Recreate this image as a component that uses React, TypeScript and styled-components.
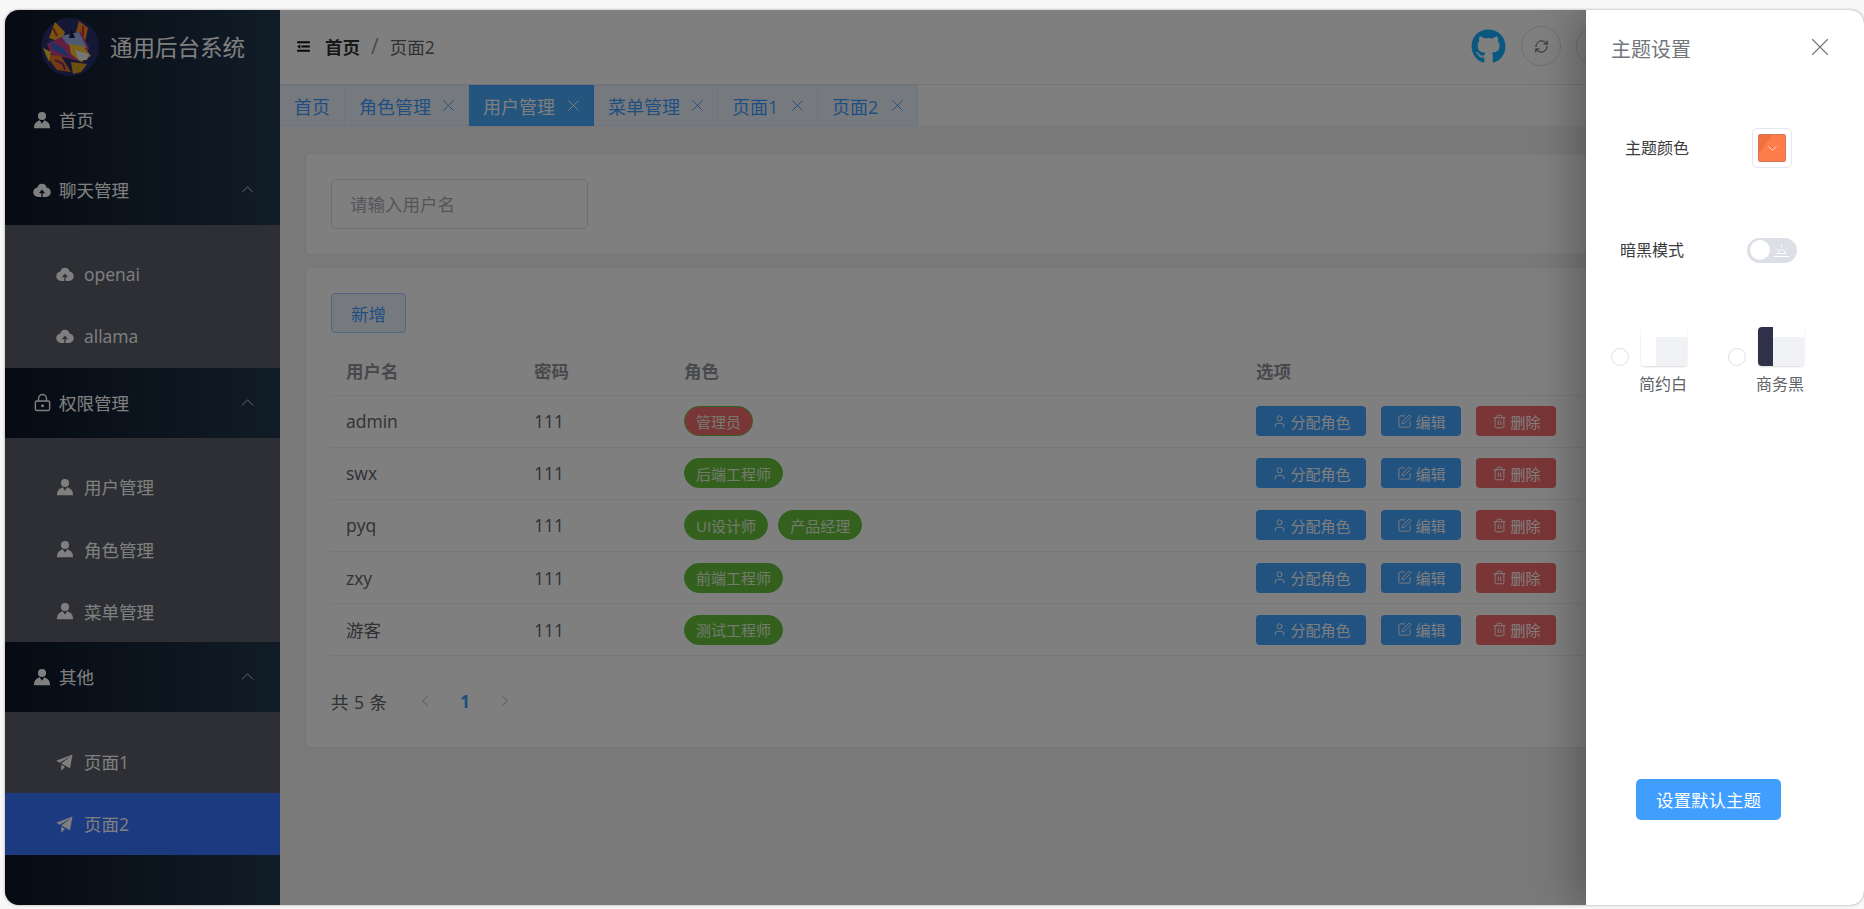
import React from "react";
import styled, { createGlobalStyle } from "styled-components";
import { ChevronDown, ChevronLeft, ChevronRight, ChevronUp, LockKeyhole, RefreshCw, Settings, SquarePen, Trash2, User, X } from "lucide-react";
import { FaGithub } from "react-icons/fa";

const GlobalStyle = createGlobalStyle`
  html, body {
    margin: 0;
    padding: 0;
    background: #f7f7f7;
  }
  * {
    box-sizing: border-box;
  }
  body {
    font-family: "Open Sans", "Noto Sans CJK SC", sans-serif;
  }
`;

const AvatarIcon = ({ size = 20 }: { size?: number }) => (
  <svg width={size} height={size} viewBox="0 0 1024 1024" fill="currentColor">
    <path d="M628.736 528.896A416 416 0 0 1 928 928H96a415.872 415.872 0 0 1 299.264-399.104L512 704l116.736-175.104zM720 304a208 208 0 1 1-416 0 208 208 0 0 1 416 0z" />
  </svg>
);

const CloudIcon = ({ size = 20 }: { size?: number }) => (
  <svg width={size} height={size} viewBox="0 0 1024 1024" fill="currentColor">
    <path d="M544 864V672h128L512 480 352 672h128v192H320v-1.6c-5.376.32-10.496 1.6-16 1.6A240 240 0 0 1 64 624c0-123.136 93.12-223.488 212.608-237.248A239.808 239.808 0 0 1 512 192a239.872 239.872 0 0 1 235.456 194.752c119.488 13.76 212.48 114.112 212.48 237.248a240 240 0 0 1-240 240c-5.376 0-10.56-1.28-16-1.6v1.6H544z" />
  </svg>
);

const PlaneIcon = ({ size = 20 }: { size?: number }) => (
  <svg width={size} height={size} viewBox="0 0 1024 1024" fill="currentColor">
    <path d="m64 448 832-320-128 704-446.08-243.328L832 192 242.816 545.472 64 448zm256 512V657.024L512 768 320 960z" />
  </svg>
);

const FoldIcon = () => (
  <svg width="17" height="17" viewBox="0 0 1024 1024" fill="currentColor">
    <path d="M896 192H128v128h768V192zm0 256H384v128h512V448zm0 256H128v128h768V704zM320 384 128 512l192 128V384z" />
  </svg>
);

const SunriseIcon = () => (
  <svg width="17" height="15" viewBox="0 0 17 15" fill="none" stroke="currentColor" strokeWidth="1">
    <path d="M1 13.5h15M4 10.5h9M4.5 10.5a4 4 0 0 1 8 0M8.5 1.5v2.5M2.5 5l1.6 1.6M14.5 5l-1.6 1.6" />
  </svg>
);

// small painted cat head for the logo
const Logo = () => (
  <LogoBox viewBox="0 0 58 58">
    <circle cx="29" cy="29" r="29" fill="#2a2f6e" />
    <path d="M14 4 L24 14 L20 24 L8 20 Z" fill="#f0a820" />
    <path d="M38 3 L47 10 L44 24 L35 14 Z" fill="#f08a20" />
    <path d="M6 26 L22 18 L40 14 L48 30 L42 44 L26 40 L10 36 Z" fill="#c83e80" />
    <path d="M20 18 L38 14 L46 30 L36 30 L26 26 Z" fill="#9ab4e8" />
    <path d="M28 26 L42 28 L50 38 L40 44 L30 36 Z" fill="#f4c430" />
    <path d="M34 32 L48 36 L46 42 L38 42 Z" fill="#e8edf5" />
    <path d="M4 36 L20 38 L30 54 L16 52 Z" fill="#e87820" />
    <path d="M30 44 L46 46 L40 54 L32 56 Z" fill="#d9a020" />
    <path d="M8 22 L22 30 L30 40 L12 32 Z" fill="#3d62c8" />
    <path d="M2 30 L10 34 L8 44 Z" fill="#f4c430" />
    <path d="M30 10 L34 20 L28 20 Z" fill="#1d1f4a" />
    <path d="M14 42 L22 46 L24 52" fill="none" stroke="#8a2a70" strokeWidth="2" />
    <path d="M12 10 L16 18 M42 8 L42 18" fill="none" stroke="#c83020" strokeWidth="2" />
  </LogoBox>
);

type MenuChild = { label: string; icon: React.ReactNode; active?: boolean };
type MenuGroup = { label: string; icon: React.ReactNode; children?: MenuChild[] };

const menu: MenuGroup[] = [
  { label: "首页", icon: <AvatarIcon /> },
  {
    label: "聊天管理",
    icon: <CloudIcon />,
    children: [
      { label: "openai", icon: <CloudIcon /> },
      { label: "allama", icon: <CloudIcon /> },
    ],
  },
  {
    label: "权限管理",
    icon: <LockKeyhole size={19} strokeWidth={1.8} />,
    children: [
      { label: "用户管理", icon: <AvatarIcon /> },
      { label: "角色管理", icon: <AvatarIcon /> },
      { label: "菜单管理", icon: <AvatarIcon /> },
    ],
  },
  {
    label: "其他",
    icon: <AvatarIcon />,
    children: [
      { label: "页面1", icon: <PlaneIcon /> },
      { label: "页面2", icon: <PlaneIcon />, active: true },
    ],
  },
];

const tabs = [
  { label: "首页", width: 65 },
  { label: "角色管理", width: 124, closable: true },
  { label: "用户管理", width: 125, closable: true, active: true },
  { label: "菜单管理", width: 124, closable: true },
  { label: "页面1", width: 100, closable: true },
  { label: "页面2", width: 100, closable: true },
];

const users = [
  { name: "admin", password: "111", roles: [{ label: "管理员", danger: true }] },
  { name: "swx", password: "111", roles: [{ label: "后端工程师" }] },
  { name: "pyq", password: "111", roles: [{ label: "UI设计师" }, { label: "产品经理" }] },
  { name: "zxy", password: "111", roles: [{ label: "前端工程师" }] },
  { name: "游客", password: "111", roles: [{ label: "测试工程师" }] },
];

const App = () => {
  return (
    <>
      <GlobalStyle />
      <Page>
        <Frame>
          <Sidebar>
            <Brand>
              <Logo />
              <BrandTitle>通用后台系统</BrandTitle>
            </Brand>
            {menu.map((group) => (
              <div key={group.label}>
                <GroupRow>
                  <GroupIcon>{group.icon}</GroupIcon>
                  {group.label}
                  {group.children && (
                    <Caret>
                      <ChevronUp size={21} strokeWidth={1.1} />
                    </Caret>
                  )}
                </GroupRow>
                {group.children && (
                  <SubMenu>
                    {group.children.map((child) => (
                      <SubRow key={child.label} $active={child.active}>
                        <GroupIcon>{child.icon}</GroupIcon>
                        {child.label}
                      </SubRow>
                    ))}
                  </SubMenu>
                )}
              </div>
            ))}
          </Sidebar>

          <Main>
            <Header>
              <FoldBtn>
                <FoldIcon />
              </FoldBtn>
              <Crumb $strong>首页</Crumb>
              <CrumbSep>/</CrumbSep>
              <Crumb>页面2</Crumb>
              <HeaderTools>
                <GithubLink>
                  <FaGithub size={35} />
                </GithubLink>
                <RoundBtn>
                  <RefreshCw size={15} strokeWidth={1.5} />
                </RoundBtn>
                <RoundBtn>
                  <Settings size={15} strokeWidth={1.5} />
                </RoundBtn>
              </HeaderTools>
            </Header>

            <TabBar>
              {tabs.map((tab) => (
                <Tab key={tab.label} $active={tab.active} $width={tab.width}>
                  {tab.label}
                  {tab.closable && <X size={19} strokeWidth={1.2} />}
                </Tab>
              ))}
            </TabBar>

            <Content>
              <Card>
                <SearchInput placeholder="请输入用户名" />
              </Card>
              <TableCard>
                <AddButton>新增</AddButton>
                <UserTable>
                  <thead>
                    <tr>
                      <Th $width={188}>用户名</Th>
                      <Th $width={150}>密码</Th>
                      <Th $width={572}>角色</Th>
                      <Th>选项</Th>
                    </tr>
                  </thead>
                  <tbody>
                    {users.map((user) => (
                      <tr key={user.name}>
                        <Td>{user.name}</Td>
                        <Td>{user.password}</Td>
                        <Td>
                          <TagRow>
                            {user.roles.map((role) => (
                              <RoleTag key={role.label} $danger={"danger" in role}>
                                {role.label}
                              </RoleTag>
                            ))}
                          </TagRow>
                        </Td>
                        <Td>
                          <ActionRow>
                            <ActionButton>
                              <User size={15} strokeWidth={1.5} />
                              分配角色
                            </ActionButton>
                            <ActionButton>
                              <SquarePen size={15} strokeWidth={1.5} />
                              编辑
                            </ActionButton>
                            <ActionButton $danger>
                              <Trash2 size={15} strokeWidth={1.5} />
                              删除
                            </ActionButton>
                          </ActionRow>
                        </Td>
                      </tr>
                    ))}
                  </tbody>
                </UserTable>
                <Pager>
                  <PagerTotal>共 5 条</PagerTotal>
                  <PagerArrow>
                    <ChevronLeft size={18} strokeWidth={1.3} />
                  </PagerArrow>
                  <PagerNumber>1</PagerNumber>
                  <PagerArrow>
                    <ChevronRight size={18} strokeWidth={1.3} />
                  </PagerArrow>
                </Pager>
              </TableCard>
            </Content>
          </Main>

          <Mask />

          <Drawer>
            <DrawerHead>
              主题设置
              <DrawerClose>
                <X size={30} strokeWidth={0.9} />
              </DrawerClose>
            </DrawerHead>
            <ColorRow>
              <SettingLabel>主题颜色</SettingLabel>
              <ColorPicker>
                <ColorSwatch>
                  <ChevronDown size={15} strokeWidth={1.6} />
                </ColorSwatch>
              </ColorPicker>
            </ColorRow>
            <DarkRow>
              <SettingLabel>暗黑模式</SettingLabel>
              <Switch>
                <SwitchKnob />
                <SunriseIcon />
              </Switch>
            </DarkRow>
            <ThemeRow>
              <ThemeOption>
                <Radio />
                <ThemeCol>
                  <Preview />
                  <ThemeName>简约白</ThemeName>
                </ThemeCol>
              </ThemeOption>
              <ThemeOption>
                <Radio />
                <ThemeCol>
                  <Preview $dark />
                  <ThemeName>商务黑</ThemeName>
                </ThemeCol>
              </ThemeOption>
            </ThemeRow>
            <DefaultButton>设置默认主题</DefaultButton>
          </Drawer>
        </Frame>
      </Page>
    </>
  );
};

const Page = styled.div`
  height: 909px;
  padding: 10px 0 4px 5px;
  background: #f7f7f7;
  overflow: hidden;
`;

const Frame = styled.div`
  position: relative;
  display: flex;
  height: 100%;
  border-radius: 14px;
  overflow: hidden;
  background: #fff;
  box-shadow: 0 0 3px rgba(0, 0, 0, 0.35);
`;

const Sidebar = styled.aside`
  flex: 0 0 275px;
  color: #fff;
  background: linear-gradient(90deg, #0d1626, #22394f);
`;

const Brand = styled.div`
  display: flex;
  align-items: center;
  height: 75px;
  padding: 0 0 2px 36px;
  gap: 11px;
`;

const LogoBox = styled.svg`
  width: 58px;
  height: 58px;
  flex: none;
`;

const BrandTitle = styled.span`
  font-size: 22.5px;
  white-space: nowrap;
`;

const GroupRow = styled.div`
  position: relative;
  display: flex;
  align-items: center;
  height: 70px;
  padding: 0 0 1px 27px;
  gap: 7px;
  font-size: 17.5px;
`;

const GroupIcon = styled.span`
  display: inline-flex;
  justify-content: center;
  width: 20px;
`;

const Caret = styled.span`
  position: absolute;
  right: 22px;
  top: 24px;
  display: flex;
  opacity: 0.8;
`;

const SubMenu = styled.div`
  padding-top: 18px;
  background: #5a5f68;
`;

const SubRow = styled.div<{ $active?: boolean }>`
  display: flex;
  align-items: center;
  height: 62.3px;
  padding-left: 50px;
  gap: 9px;
  font-size: 17.5px;
  background: ${(p) => (p.$active ? "#3674ff" : "transparent")};
`;

const Main = styled.main`
  flex: 1;
  min-width: 0;
  display: flex;
  flex-direction: column;
  background: #f5f5f5;
`;

const Header = styled.header`
  flex: 0 0 75px;
  display: flex;
  align-items: center;
  padding: 0 0 2px 15px;
  background: #fff;
  border-bottom: 1px solid #e6e8ee;
`;

const FoldBtn = styled.span`
  display: inline-flex;
  margin-right: 13px;
  color: #111;
`;

const Crumb = styled.span<{ $strong?: boolean }>`
  font-size: 17.5px;
  font-weight: ${(p) => (p.$strong ? 700 : 400)};
  color: ${(p) => (p.$strong ? "#303133" : "#606266")};
`;

const CrumbSep = styled.span`
  margin: 0 11px;
  font-size: 21px;
  color: #8f9299;
`;

const HeaderTools = styled.div`
  display: flex;
  align-items: center;
  gap: 15px;
  margin-left: auto;
  margin-right: 248px;
`;

const GithubLink = styled.span`
  display: inline-flex;
  color: #14b0ff;
`;

const RoundBtn = styled.span`
  display: inline-flex;
  align-items: center;
  justify-content: center;
  width: 40px;
  height: 40px;
  border-radius: 50%;
  border: 1px solid #dcdfe6;
  color: #404246;
`;

const TabBar = styled.div`
  flex: 0 0 41px;
  display: flex;
  background: #fff;
`;

const Tab = styled.div<{ $active?: boolean; $width: number }>`
  display: flex;
  flex: 0 0 ${(p) => p.$width}px;
  align-items: center;
  justify-content: space-between;
  padding: 0 10px 0 14px;
  font-size: 18px;
  white-space: nowrap;
  border: 1px solid ${(p) => (p.$active ? "#409eff" : "#d9ecff")};
  border-left-width: 0;
  background: ${(p) => (p.$active ? "#46aaff" : "#ecf5ff")};
  color: ${(p) => (p.$active ? "#fff" : "#409eff")};
`;

const Content = styled.div`
  flex: 1;
  display: flex;
  flex-direction: column;
  gap: 12px;
  padding: 27px 25px 0 25px;
  background: #f3f3f3;
`;

const Card = styled.section`
  padding: 25px;
  background: #fff;
  border: 1px solid #e8eaf0;
  border-radius: 5px;
`;

const TableCard = styled(Card)`
  height: 481px;
`;

const SearchInput = styled.input`
  display: block;
  width: 257px;
  height: 50px;
  padding: 0 18px;
  font: 17.5px "Open Sans", "Noto Sans CJK SC", sans-serif;
  border: 1px solid #dcdfe6;
  border-radius: 5px;
  outline: none;
  &::placeholder {
    color: #a8abb2;
  }
`;

const AddButton = styled.button`
  display: block;
  width: 75px;
  height: 40px;
  font: 17.5px "Open Sans", "Noto Sans CJK SC", sans-serif;
  color: #409eff;
  background: #ecf5ff;
  border: 1px solid #a0cfff;
  border-radius: 4px;
`;

const UserTable = styled.table`
  width: 100%;
  margin-top: 13px;
  table-layout: fixed;
  border-collapse: collapse;
`;

const Th = styled.th<{ $width?: number }>`
  width: ${(p) => (p.$width ? `${p.$width}px` : "auto")};
  height: 49px;
  padding: 0 15px;
  text-align: left;
  font-size: 17.5px;
  font-weight: 700;
  color: #909399;
  border-bottom: 1px solid #ebeef5;
`;

const Td = styled.td`
  height: 52.2px;
  padding: 0 15px;
  font-size: 17.5px;
  color: #606266;
  border-bottom: 1px solid #ebeef5;
`;

const TagRow = styled.div`
  display: flex;
  gap: 10px;
`;

const RoleTag = styled.span<{ $danger?: boolean }>`
  display: inline-flex;
  align-items: center;
  height: 30px;
  padding: 0 11px;
  font-size: 15px;
  color: #e8f3e0;
  border-radius: 15px;
  background: ${(p) => (p.$danger ? "#f56c6c" : "#67c23a")};
  border: 1px solid #67c23a;
`;

const ActionRow = styled.div`
  display: flex;
  gap: 15px;
`;

const ActionButton = styled.button<{ $danger?: boolean }>`
  display: inline-flex;
  align-items: center;
  justify-content: center;
  gap: 4px;
  height: 30px;
  padding: 0 15.5px;
  font: 15px "Open Sans", "Noto Sans CJK SC", sans-serif;
  color: #fff;
  background: ${(p) => (p.$danger ? "#f56c6c" : "#44a4ff")};
  border: 0;
  border-radius: 4px;
  white-space: nowrap;
`;

const Pager = styled.div`
  display: flex;
  align-items: center;
  margin-top: 25px;
  height: 40px;
  font-size: 17.5px;
  color: #606266;
`;

const PagerTotal = styled.span`
  margin-right: 29px;
  word-spacing: 1px;
`;

const PagerArrow = styled.span`
  display: inline-flex;
  color: #a8abb2;
`;

const PagerNumber = styled.span`
  width: 62px;
  text-align: center;
  font-weight: 700;
  color: #409eff;
`;

const Mask = styled.div`
  position: absolute;
  inset: 0;
  background: rgba(0, 0, 0, 0.5);
`;

const Drawer = styled.aside`
  position: absolute;
  top: 0;
  right: 0;
  bottom: 0;
  width: 278px;
  display: flex;
  flex-direction: column;
  background: #fff;
  box-shadow: -8px 0 40px rgba(0, 0, 0, 0.3);
`;

const DrawerHead = styled.div`
  display: flex;
  align-items: center;
  justify-content: space-between;
  padding: 20px 29px 0 25px;
  height: 56px;
  font-size: 20px;
  color: #72767b;
`;

const DrawerClose = styled.span`
  display: inline-flex;
  margin-top: -2px;
`;

const SettingLabel = styled.span`
  font-size: 16px;
  color: #3a3b3e;
  padding-bottom: 2px;
`;

const ColorRow = styled.div`
  display: flex;
  align-items: center;
  margin-top: 62px;
  padding-left: 39px;
  gap: 63px;
`;

const ColorPicker = styled.div`
  display: flex;
  align-items: center;
  justify-content: center;
  width: 40px;
  height: 40px;
  border: 1px solid #e4e7ed;
  border-radius: 5px;
`;

const ColorSwatch = styled.div`
  display: flex;
  align-items: center;
  justify-content: center;
  width: 28px;
  height: 28px;
  color: #ffd9c9;
  background: linear-gradient(125deg, #f0703e 0 30%, #ff7d4a 30% 100%);
  border: 1px solid #cf7658;
  border-radius: 2px;
`;

const DarkRow = styled.div`
  display: flex;
  align-items: center;
  margin-top: 69px;
  padding-left: 34px;
  gap: 63px;
`;

const Switch = styled.div`
  display: flex;
  align-items: center;
  gap: 3px;
  width: 50px;
  height: 25px;
  padding: 0 3px;
  color: #fff;
  background: #dcdfe6;
  border-radius: 13px;
`;

const SwitchKnob = styled.span`
  width: 20px;
  height: 20px;
  border-radius: 50%;
  background: #fff;
`;

const ThemeRow = styled.div`
  display: flex;
  margin-top: 64px;
  padding-left: 25px;
  gap: 41px;
`;

const ThemeOption = styled.div`
  display: flex;
  align-items: flex-start;
  gap: 10px;
`;

const Radio = styled.span`
  width: 18px;
  height: 18px;
  margin-top: 21px;
  border: 1px solid #dcdfe6;
  border-radius: 50%;
`;

const ThemeCol = styled.div`
  display: flex;
  flex-direction: column;
  align-items: flex-end;
`;

const Preview = styled.div<{ $dark?: boolean }>`
  width: 46px;
  height: 39px;
  border-radius: 4px;
  box-shadow: 0 1px 2px rgba(0, 0, 0, 0.15);
  background:
    linear-gradient(90deg, ${(p) => (p.$dark ? "#2e3148" : "#fff")} 15px, transparent 15px),
    linear-gradient(180deg, #fff 10px, #f0f2f5 10px);
`;

const ThemeName = styled.span`
  margin-top: 7px;
  font-size: 16px;
  line-height: 22px;
  color: #606266;
`;

const DefaultButton = styled.button`
  margin: auto 0 85px 50px;
  width: 145px;
  height: 41px;
  font: 17.5px "Open Sans", "Noto Sans CJK SC", sans-serif;
  color: #fff;
  background: #409eff;
  border: 0;
  border-radius: 5px;
`;

export default App;
